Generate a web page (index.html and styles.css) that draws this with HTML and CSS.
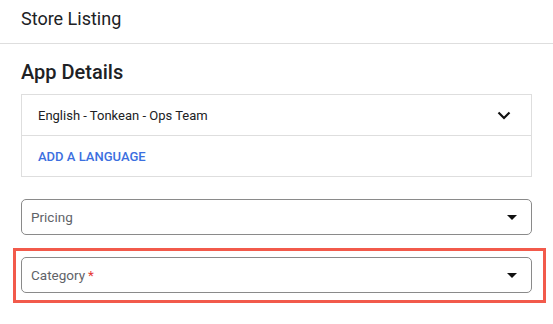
FILE: index.html
```html
<!DOCTYPE html>
<html lang="en">
<head>
  <meta charset="UTF-8">
  <meta name="viewport" content="width=device-width, initial-scale=1.0">
  <title>Store Listing</title>
  <link rel="stylesheet" href="styles.css">
</head>
<body>
  <div class="header">Store Listing</div>
  <div class="content">
    <h2>App Details</h2>
    <div class="card">
      <div class="row">
        <span>English - Tonkean - Ops Team</span>
        <svg class="chevron" width="14" height="9" viewBox="0 0 14 9"><path d="M1.5 1.5 L7 7 L12.5 1.5" fill="none" stroke="#111" stroke-width="2.2"/></svg>
      </div>
      <div class="row link">ADD A LANGUAGE</div>
    </div>
    <div class="select pricing">
      <span>Pricing</span>
      <span class="caret"></span>
    </div>
    <div class="highlight">
      <div class="select">
        <span>Category<b class="req">*</b></span>
        <span class="caret"></span>
      </div>
    </div>
  </div>
</body>
</html>
```

FILE: styles.css
```css
body { margin: 0; background: #fff; font-family: Roboto, "Noto Sans", Arial, sans-serif; color: #202124; }
.header { height: 43px; line-height: 38px; padding-left: 21px; font-size: 18px; border-bottom: 1px solid #dedede; }
.content { padding: 0 21px; }
h2 { margin: 16px 0 10px; font-size: 20px; font-weight: 500; line-height: 24px; }
.card { border: 1px solid #dedede; }
.row { height: 40px; display: flex; align-items: center; justify-content: space-between; padding: 0 20px 0 16px; font-size: 13px; }
.row + .row { border-top: 1px solid #dedede; }
.chevron { display: block; }
.link { color: #3c6fe0; font-weight: 500; }
.select { height: 34px; border: 1px solid #8a8a8a; border-radius: 5px; display: flex; align-items: center; justify-content: space-between; padding: 0 14px 0 9px; font-size: 13.5px; color: #5f6368; }
.pricing { margin-top: 22px; }
.caret { width: 0; height: 0; border-left: 5px solid transparent; border-right: 5px solid transparent; border-top: 5px solid #111; }
.req { color: #e53935; font-weight: 400; margin-left: 3px; }
.highlight { margin: 13px -14px 0 -8px; padding: 6px 11px 7px 5px; border: 3px solid #f25a4b; }
```
